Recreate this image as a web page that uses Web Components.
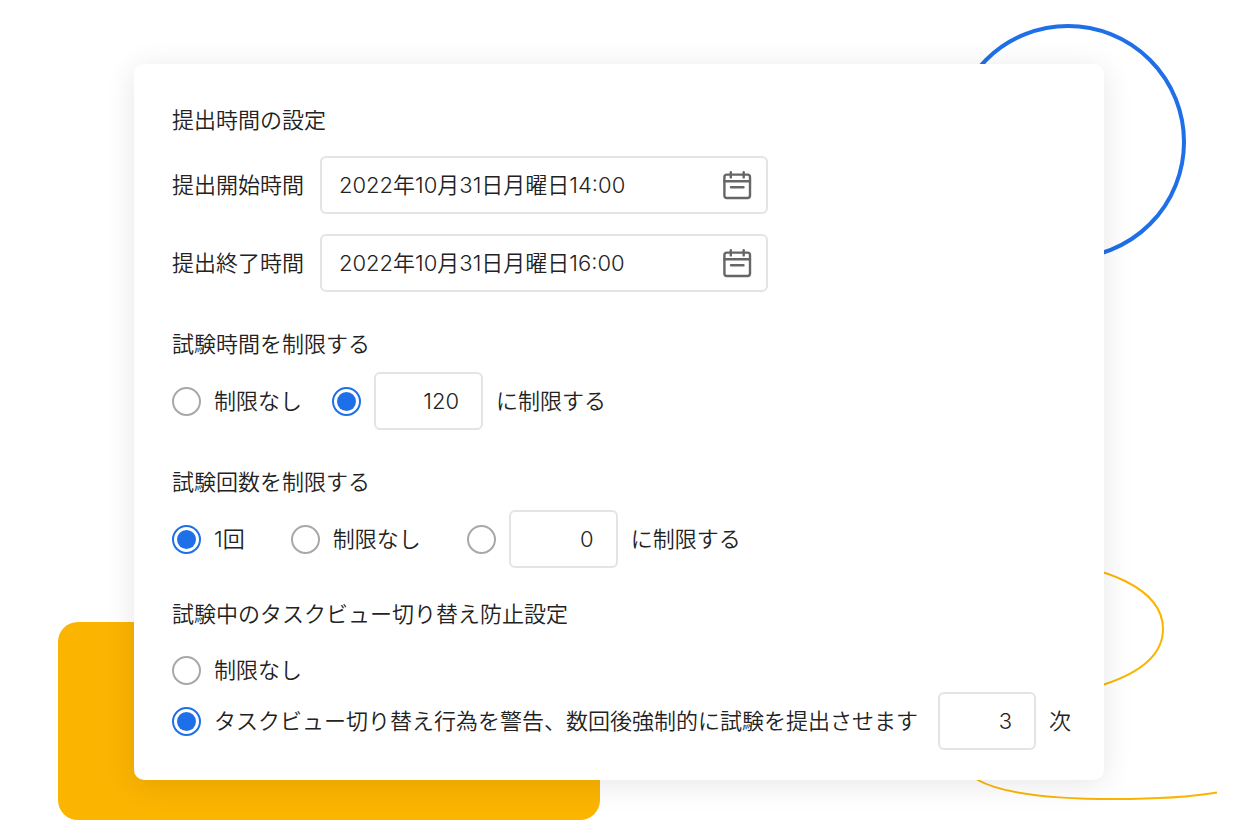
<!DOCTYPE html>
<html lang="ja">
<head>
<meta charset="utf-8">
<meta name="viewport" content="width=device-width, initial-scale=1">
<title>提出時間の設定</title>
<style>
  :root {
    --blue: #1f6fe8;
    --amber: #fbb400;
    --line: #e4e4e4;
    --ring: #a8a8a8;
    --ink: #222;
    --control: 58px;
  }
  body {
    margin: 0;
    background: #fff;
    color: var(--ink);
    font: 350 22px/32px Inter, "Noto Sans CJK JP", sans-serif;
  }
</style>
</head>
<body>
<settings-stage>
  <settings-card>
    <settings-section heading="提出時間の設定" style="--head-gap: 20px">
      <date-field label="提出開始時間" value="2022年10月31日月曜日14:00"></date-field>
      <date-field label="提出終了時間" value="2022年10月31日月曜日16:00"></date-field>
    </settings-section>

    <settings-section heading="試験時間を制限する" style="--before: 36px">
      <option-group label="試験時間を制限する">
        <radio-option>制限なし</radio-option>
        <radio-option checked><number-box label="制限時間" value="120"></number-box>に制限する</radio-option>
      </option-group>
    </settings-section>

    <settings-section heading="試験回数を制限する" style="--before: 36px">
      <option-group label="試験回数を制限する" style="--item-gap: 46px">
        <radio-option checked>1回</radio-option>
        <radio-option>制限なし</radio-option>
        <radio-option><number-box label="制限回数" value="0"></number-box>に制限する</radio-option>
      </option-group>
    </settings-section>

    <settings-section heading="試験中のタスクビュー切り替え防止設定" style="--before: 30px; --head-gap: 24px">
      <option-group label="試験中のタスクビュー切り替え防止設定" stacked>
        <radio-option>制限なし</radio-option>
        <radio-option checked><span>タスクビュー切り替え行為を警告、数回後強制的に試験を提出させます</span><number-box label="警告回数" value="3" narrow></number-box>次</radio-option>
      </option-group>
    </settings-section>
  </settings-card>
</settings-stage>

<script>
class BaseElement extends HTMLElement {
  render(html) {
    if (!this.shadowRoot) this.attachShadow({ mode: 'open' });
    const t = document.createElement('template');
    t.innerHTML = html;
    this.shadowRoot.replaceChildren(t.content.cloneNode(true));
  }
  text(name) { return this.getAttribute(name) || ''; }
}

// Page backdrop: decorative shapes are anchored to the card's corners.
customElements.define('settings-stage', class extends BaseElement {
  connectedCallback() {
    this.render(`
      <style>
        :host { display: block; overflow: hidden; padding: 64px 156px 60px 134px; }
        main { position: relative; }
        ::slotted(*) { position: relative; }
        .deco { position: absolute; pointer-events: none; }
        .circle { top: -40px; right: -82px; width: 236px; height: 236px; box-sizing: border-box;
          border: 4px solid var(--blue); border-radius: 50%; }
        .block { left: -76px; bottom: -40px; width: 542px; height: 198px;
          background: var(--amber); border-radius: 20px; }
        .swirl { right: -126px; bottom: -30px; width: 290px; height: 260px; }
      </style>
      <main>
        <div class="deco circle"></div>
        <div class="deco block"></div>
        <svg class="deco swirl" viewBox="940 550 290 260" fill="none" stroke="#fbb400" stroke-width="2" aria-hidden="true">
          <path d="M1040 562C1104 565 1163 588 1163 629C1163 656 1139 673 1104 684.500C1050 704 962 715 962 758C962 767 968 774 977 779.500C1000 793 1050 799 1115 799C1151 799 1188 797.500 1217 792.500"/>
        </svg>
        <slot></slot>
      </main>`);
  }
});

customElements.define('settings-card', class extends BaseElement {
  connectedCallback() {
    this.render(`
      <style>
        :host { display: block; padding: 40px 33px 30px 38px; background: #fff;
          border-radius: 10px; box-shadow: 0 4px 30px rgba(0, 0, 0, .1); }
      </style>
      <form><slot></slot></form>`);
  }
});

customElements.define('settings-section', class extends BaseElement {
  connectedCallback() {
    this.render(`
      <style>
        :host { display: block; padding-top: var(--before, 0); }
        h2 { margin: 0 0 var(--head-gap, 12px); font: inherit; }
        div { display: flex; flex-direction: column; gap: 20px; }
      </style>
      <h2>${this.text('heading')}</h2>
      <div><slot></slot></div>`);
  }
});

customElements.define('date-field', class extends BaseElement {
  connectedCallback() {
    this.render(`
      <style>
        :host { display: flex; align-items: center; }
        label { flex: none; width: 148px; }
        .box { display: flex; align-items: center; width: 448px; height: var(--control);
          box-sizing: border-box; padding: 0 14px 0 17px; border: 2px solid var(--line); border-radius: 6px; }
        input { flex: 1; min-width: 0; padding: 0; border: 0; outline: 0; background: none;
          font: inherit; color: inherit; }
        button { display: block; padding: 0; border: 0; background: none; cursor: pointer; }
        svg { display: block; }
      </style>
      <label for="date">${this.text('label')}</label>
      <div class="box">
        <input id="date" type="text" value="${this.text('value')}">
        <button type="button" aria-label="カレンダーを開く">
          <svg width="30" height="30" viewBox="0 0 30 30" fill="none" stroke="#666" stroke-width="2.400" stroke-linecap="round">
            <rect x="2.400" y="4.600" width="25.600" height="23.400" rx="2.500"/>
            <path d="M2.400 11.200H28M8.800 2.200V7.400M21.700 2.200V7.400M9 17.200H21.500"/>
          </svg>
        </button>
      </div>`);
  }
});

customElements.define('number-box', class extends BaseElement {
  connectedCallback() {
    this.render(`
      <style>
        :host { display: block; flex: none; width: 109px; }
        :host([narrow]) { width: 98px; }
        input { display: block; width: 100%; height: var(--control); box-sizing: border-box;
          padding: 0 22px; border: 2px solid var(--line); border-radius: 6px; background: #fff;
          font: inherit; color: inherit; text-align: right; }
      </style>
      <input type="text" inputmode="numeric" aria-label="${this.text('label')}" value="${this.text('value')}">`);
  }
});

customElements.define('radio-option', class extends BaseElement {
  connectedCallback() {
    this.render(`
      <style>
        :host { display: block; }
        label { display: flex; align-items: center; gap: 13px; }
        input { appearance: none; flex: none; width: 29px; height: 29px; margin: 0; padding: 3px;
          box-sizing: border-box; border: 2px solid var(--ring); border-radius: 50%; background: #fff; }
        input:checked { border-color: var(--blue); background: var(--blue) content-box; }
        ::slotted(span) { flex: 1; }
      </style>
      <label><input type="radio" ${this.hasAttribute('checked') ? 'checked' : ''}><slot></slot></label>`);
    this.radio.addEventListener('change', () =>
      this.dispatchEvent(new CustomEvent('pick', { bubbles: true })));
  }
  get radio() { return this.shadowRoot.querySelector('input'); }
});

// Keeps one option checked at a time across the slotted radio options.
customElements.define('option-group', class extends BaseElement {
  connectedCallback() {
    this.setAttribute('role', 'radiogroup');
    this.setAttribute('aria-label', this.text('label'));
    this.render(`
      <style>
        :host { display: flex; flex-wrap: wrap; align-items: center; gap: 6px var(--item-gap, 30px); }
        :host([stacked]) { flex-direction: column; flex-wrap: nowrap; align-items: stretch; }
      </style>
      <slot></slot>`);
    this.addEventListener('pick', (e) => {
      for (const o of this.querySelectorAll('radio-option')) o.radio.checked = o === e.target;
    });
  }
});
</script>
</body>
</html>
